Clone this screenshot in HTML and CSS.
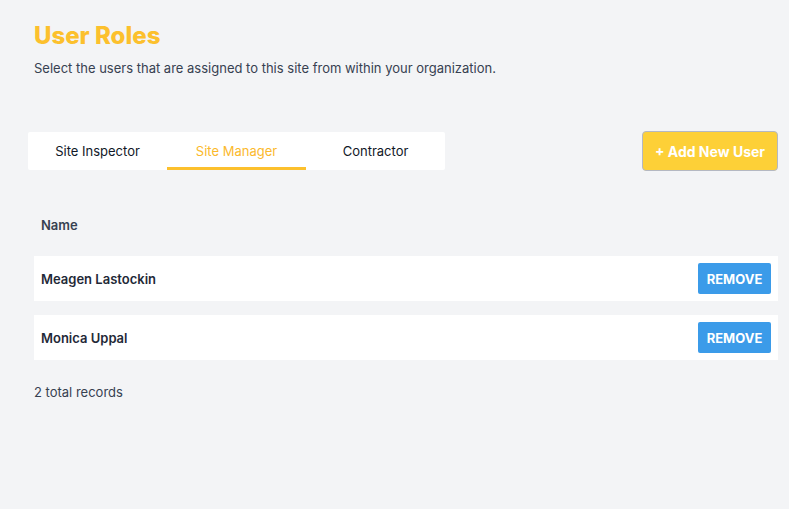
FILE: index.html
```html
<!DOCTYPE html>
<html lang="en">
<head>
    <meta charset="UTF-8">
    <meta name="viewport" content="width=device-width, initial-scale=1.0">
    <title>User Roles</title>
    <link rel="stylesheet" href="styles.css">
</head>
<body>
    <div class="page">
        <h1 class="title">User Roles</h1>
        <p class="subtitle">Select the users that are assigned to this site from within your organization.</p>

        <div class="toolbar">
            <div class="tabs">
                <div class="tab">Site Inspector</div>
                <div class="tab active">Site Manager</div>
                <div class="tab">Contractor</div>
            </div>
            <button class="add-btn">+ Add New User</button>
        </div>

        <div class="table">
            <div class="table-head">Name</div>
            <div class="row">
                <span class="name">Meagen Lastockin</span>
                <button class="remove-btn">Remove</button>
            </div>
            <div class="row">
                <span class="name">Monica Uppal</span>
                <button class="remove-btn">Remove</button>
            </div>
        </div>

        <p class="total">2 total records</p>
    </div>
</body>
</html>
```

FILE: styles.css
```css
body {
    margin: 0;
    padding: 0;
    background: #f3f4f6;
    font-family: 'Inter', 'Noto Sans', sans-serif;
    color: #374151;
    height: 100vh;
}
.page {
    padding: 20px 11px 0 34px;
}
.title {
    margin: 0;
    font-size: 24px;
    line-height: 32px;
    font-weight: 800;
    color: #fcc02d;
}
.subtitle {
    margin: 6px 0 0;
    font-size: 13px;
    line-height: 20px;
    color: #374151;
}
.toolbar {
    display: flex;
    align-items: center;
    justify-content: space-between;
    margin-top: 53px;
    height: 40px;
}
.tabs {
    display: flex;
    margin-left: -6px;
    background: #fff;
    border-radius: 2px;
    height: 38px;
}
.tab {
    width: 139px;
    display: flex;
    align-items: center;
    justify-content: center;
    font-size: 13px;
    color: #111827;
    box-sizing: border-box;
    border-bottom: 3px solid transparent;
    padding-top: 3px;
}
.tab.active {
    color: #fbb92c;
    border-bottom-color: #fcc02d;
}
.add-btn {
    width: 136px;
    height: 40px;
    background: #fdd037;
    border: 1px solid #b4b8c2;
    border-radius: 4px;
    color: #fff;
    font-family: inherit;
    font-size: 14px;
    font-weight: 700;
    cursor: pointer;
}
.table {
    margin-top: 31px;
}
.table-head {
    height: 46px;
    display: flex;
    align-items: center;
    padding: 0 7px;
    font-size: 13px;
    font-weight: 600;
    color: #374151;
    margin-bottom: 8px;
}
.row {
    height: 45px;
    background: #fff;
    display: flex;
    align-items: center;
    justify-content: space-between;
    padding: 0 7px;
    margin-bottom: 14px;
}
.name {
    font-size: 13px;
    font-weight: 600;
    color: #1f2937;
}
.remove-btn {
    width: 73px;
    height: 31px;
    background: #3b9be9;
    border: none;
    border-radius: 2px;
    color: #fff;
    font-family: inherit;
    font-size: 13px;
    font-weight: 700;
    text-transform: uppercase;
    cursor: pointer;
}
.total {
    margin: 22px 0 0;
    font-size: 13px;
    line-height: 20px;
    color: #374151;
}
```
